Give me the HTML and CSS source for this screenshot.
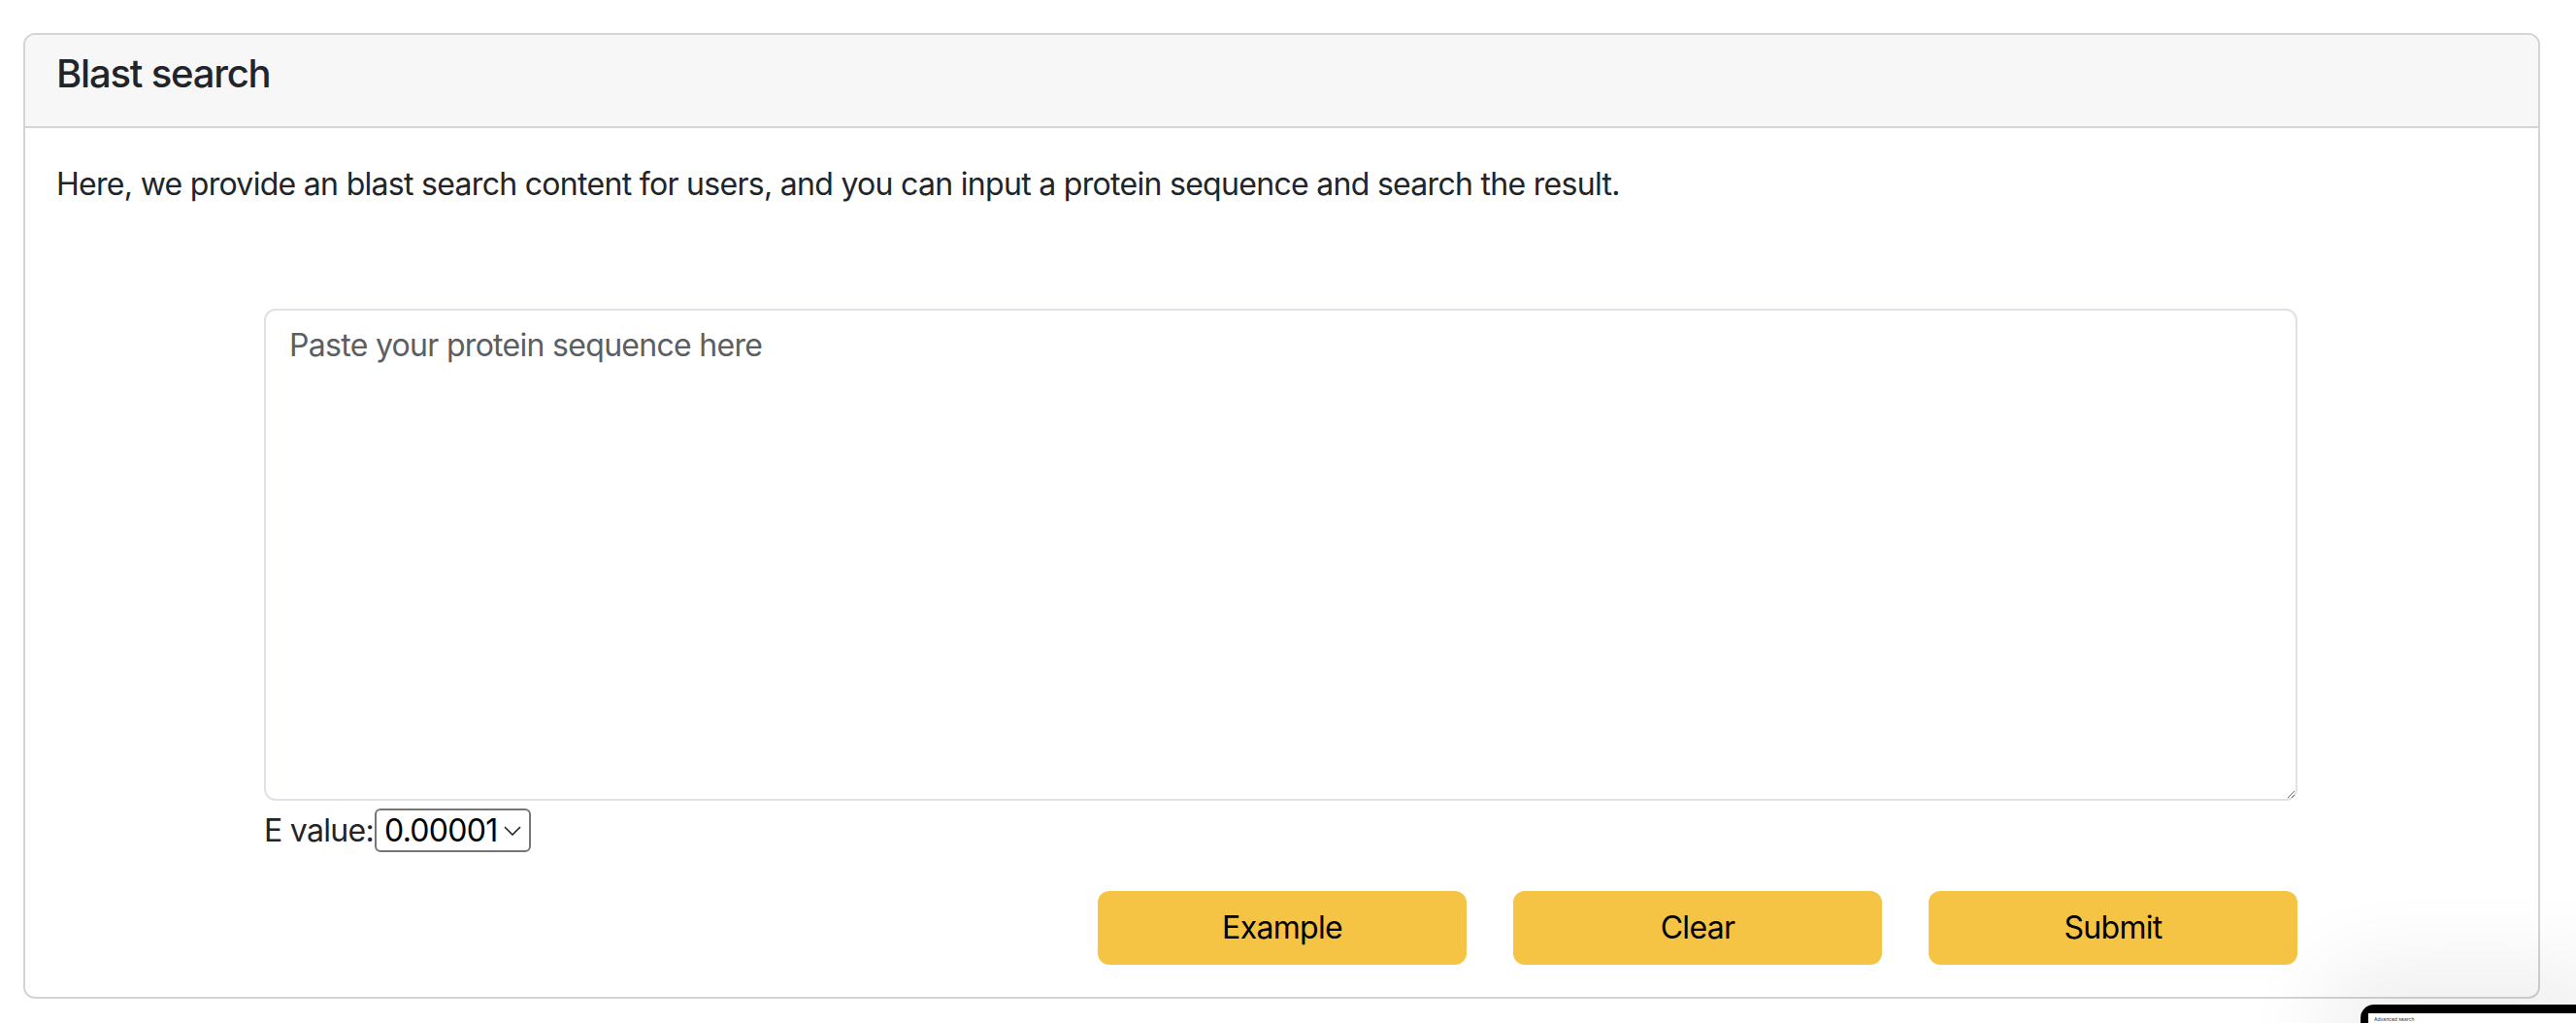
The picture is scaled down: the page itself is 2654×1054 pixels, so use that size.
FILE: index.html
```html
<!DOCTYPE html>
<html lang="en">
<head>
<meta charset="utf-8">
<title>Blast search</title>
<link rel="stylesheet" href="styles.css">
</head>
<body>
<div class="card">
  <div class="card-header">
    <h5 class="card-title">Blast search</h5>
  </div>
  <div class="card-body">
    <p class="intro">Here, we provide an blast search content for users, and you can input a protein sequence and search the result.</p>
    <div class="form-area">
      <textarea class="seq-input" placeholder="Paste your protein sequence here"></textarea>
      <div class="evalue-row">
        <label class="evalue-label" for="evalue">E value:</label><select id="evalue" class="evalue-select">
          <option>0.00001</option>
          <option>0.0001</option>
          <option>0.001</option>
        </select>
      </div>
      <div class="actions">
        <button class="btn" type="button">Example</button>
        <button class="btn" type="button">Clear</button>
        <button class="btn" type="button">Submit</button>
      </div>
    </div>
  </div>
</div>
<div class="thumb">
  <div class="thumb-inner">Advanced search</div>
</div>
</body>
</html>
```
FILE: styles.css
```css
html, body {
  margin: 0;
  padding: 0;
  overflow: hidden;
  background: #ffffff;
}
body {
  font-family: Inter, "Liberation Sans", sans-serif;
  font-size: 32px;
  line-height: 48px;
  letter-spacing: -0.7px;
  color: #212529;
  padding-top: 34px;
  height: 1054px;
  box-sizing: border-box;
  position: relative;
}
.card {
  margin-left: 24px;
  width: 2593px;
  border: 2px solid #d4d4d4;
  border-radius: 12px;
  box-sizing: border-box;
  background: #fff;
}
.card-header {
  background: #f7f7f7;
  border-bottom: 2px solid #d4d4d4;
  border-radius: 10px 10px 0 0;
  padding: 16px 32px 16px;
}
.card-title {
  margin: 0 0 14px;
  font-size: 40px;
  line-height: 48px;
  font-weight: 500;
  letter-spacing: -1.2px;
}
.card-body {
  padding: 34px 32px 33px;
}
.intro {
  margin: 0 0 104px;
}
.form-area {
  margin: 0 216px 0 214px;
}
.seq-input {
  display: block;
  width: 100%;
  height: 507px;
  box-sizing: border-box;
  margin: 0;
  padding: 12px 24px;
  border: 2px solid #dee2e6;
  border-radius: 12px;
  font-family: inherit;
  font-size: 32px;
  line-height: 48px;
  letter-spacing: -0.7px;
  color: #212529;
  resize: vertical;
}
.seq-input::placeholder {
  color: #5b5e62;
}
.evalue-row {
  display: flex;
  align-items: center;
  height: 61px;
}
.evalue-label {
  line-height: 48px;
}
.evalue-select {
  -webkit-appearance: none;
  appearance: none;
  width: 161px;
  height: 45px;
  margin-left: 1px;
  padding: 0 0 0 8px;
  border: 2px solid #767676;
  border-radius: 6px;
  background: #fff url("data:image/svg+xml,%3Csvg xmlns='http://www.w3.org/2000/svg' width='18' height='10' viewBox='0 0 18 10'%3E%3Cpath d='M1 1l8 8 8-8' fill='none' stroke='%23222' stroke-width='1.6'/%3E%3C/svg%3E") no-repeat right 8px center;
  font-family: inherit;
  font-size: 32px;
  letter-spacing: -0.7px;
  color: #000;
}
.actions {
  display: flex;
  justify-content: flex-end;
  gap: 48px;
  margin-top: 32px;
}
.btn {
  width: 380px;
  height: 76px;
  border: none;
  border-radius: 12px;
  background: #f6c445;
  color: #000;
  font-family: inherit;
  font-size: 32px;
  line-height: 48px;
  letter-spacing: -0.7px;
  padding: 0;
}
.thumb {
  position: absolute;
  left: 2432px;
  top: 1035px;
  width: 222px;
  height: 19px;
  background: #000;
  border-radius: 14px 0 0 0;
  box-shadow: 0 0 90px 40px rgba(0, 0, 0, 0.07);
  padding: 9px 0 0 8px;
  box-sizing: border-box;
}
.thumb-inner {
  background: #fff;
  height: 100%;
  font-size: 5px;
  line-height: 8px;
  letter-spacing: 0;
  padding: 2px 6px 0;
  color: #333;
  overflow: hidden;
}
```
